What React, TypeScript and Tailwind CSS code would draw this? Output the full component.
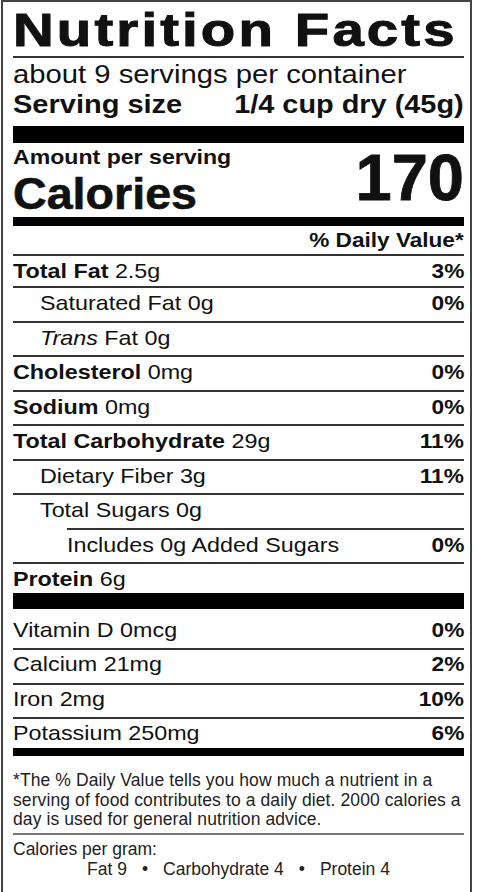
import clsx from 'clsx'
import type { ReactNode } from 'react'

type Nutrient = {
  label?: string
  italic?: string
  rest: string
  dv?: string
  level?: 0 | 1 | 2
  h?: string
}

const nutrients: Nutrient[] = [
  { label: 'Total Fat', rest: '2.5g', dv: '3%', h: 'h-[32px]' },
  { rest: 'Saturated Fat 0g', dv: '0%', level: 1 },
  { italic: 'Trans', rest: 'Fat 0g', level: 1 },
  { label: 'Cholesterol', rest: '0mg', dv: '0%' },
  { label: 'Sodium', rest: '0mg', dv: '0%' },
  { label: 'Total Carbohydrate', rest: '29g', dv: '11%' },
  { rest: 'Dietary Fiber 3g', dv: '11%', level: 1 },
  { rest: 'Total Sugars 0g', level: 1 },
  { rest: 'Includes 0g Added Sugars', dv: '0%', level: 2 },
  { label: 'Protein', rest: '6g', h: 'h-[31px]' },
]

const vitamins = [
  { name: 'Vitamin D 0mcg', dv: '0%', h: 'h-[39px] pt-[6px] leading-[29px]' },
  { name: 'Calcium 21mg', dv: '2%', h: 'h-[35px] border-t-2 leading-[27px]' },
  { name: 'Iron 2mg', dv: '10%', h: 'h-[34px] border-t-2 leading-[27px]' },
  { name: 'Potassium 250mg', dv: '6%', h: 'h-[31px] border-t-2 leading-[27px]' },
]

// label type is slightly stretched horizontally
function Wide({ children, right, className }: { children: ReactNode; right?: boolean; className?: string }) {
  return (
    <span
      className={clsx(
        'inline-block whitespace-nowrap',
        right ? 'origin-right' : 'origin-left',
        className ?? 'scale-x-[1.11]'
      )}
    >
      {children}
    </span>
  )
}

function NutrientRow({ n }: { n: Nutrient }) {
  return (
    <div
      className={clsx(
        'flex justify-between border-t-2 border-[#333] leading-[29px]',
        n.h ?? 'h-[34.5px]',
        n.level === 2 && 'ml-[54px]'
      )}
    >
      <span className={clsx(n.level === 1 && 'pl-[27px]')}>
        <Wide>
          {n.label && <span className="font-bold">{n.label} </span>}
          {n.italic && <span className="italic">{n.italic} </span>}
          {n.rest}
        </Wide>
      </span>
      {n.dv && (
        <Wide right className="scale-x-[1.08] font-bold">
          {n.dv}
        </Wide>
      )}
    </div>
  )
}

export default function App() {
  return (
    <div className="w-[478px] h-[892px] overflow-hidden bg-white font-['Liberation_Sans',Arial,sans-serif] text-[#111]">
      <div className="ml-px w-[471px] h-[892px] border-x-2 border-t-2 border-[#444] pl-[10px] pr-[6px]">
        {/* header */}
        <div className="mt-[4px] pb-[3px] border-b-2 border-[#333] text-[47px] leading-[47px] whitespace-nowrap">
          <span className="inline-block origin-left scale-x-[1.2] font-black tracking-[2.6px] [-webkit-text-stroke:1px_#111]">
            Nutrition Facts
          </span>
        </div>
        <div className="mt-[3px] text-[25px] leading-[26px]">
          <Wide className="scale-x-[1.17]">about 9 servings per container</Wide>
        </div>
        <div className="mt-[4px] flex justify-between text-[25px] leading-[26px] font-bold">
          <Wide className="scale-x-[1.16]">Serving size</Wide>
          <Wide right className="scale-x-[1.155]">1/4 cup dry (45g)</Wide>
        </div>

        <div className="mt-[9px] h-[17px] bg-black" />

        <div className="flex justify-between font-bold">
          <div>
            <div className="mt-[3px] text-[21px] leading-[22px]">
              <Wide className="scale-x-[1.1]">Amount per serving</Wide>
            </div>
            <div className="mt-[4px] text-[44px] leading-[44px]">
              <Wide className="scale-x-[1.06] [-webkit-text-stroke:0.6px_#111]">Calories</Wide>
            </div>
          </div>
          <div className="mt-[2px] text-[65px] leading-[65px] [-webkit-text-stroke:0.8px_#111]">170</div>
        </div>

        <div className="mt-px h-[9px] bg-black" />

        <div className="h-[28px] pt-[3px] text-right text-[20px] leading-[22px] font-bold">
          <Wide right className="scale-x-[1.13]">% Daily Value*</Wide>
        </div>

        <div className="text-[21px]">
          {nutrients.map((n, i) => (
            <NutrientRow key={i} n={n} />
          ))}
        </div>

        <div className="h-[16px] bg-black" />

        <div className="text-[21px]">
          {vitamins.map((v) => (
            <div key={v.name} className={clsx('flex justify-between border-[#333]', v.h)}>
              <Wide>{v.name}</Wide>
              <Wide right className="scale-x-[1.08] font-bold">
                {v.dv}
              </Wide>
            </div>
          ))}
        </div>

        <div className="h-[8px] bg-black" />

        {/* footnote */}
        <div className="pt-[15px] pb-[3px] border-b-2 border-[#777] text-[17.5px] leading-[19.5px] tracking-[0.1px] text-[#222] whitespace-nowrap">
          *The % Daily Value tells you how much a nutrient in a
          <br />
          serving of food contributes to a daily diet. 2000 calories a
          <br />
          day is used for general nutrition advice.
        </div>
        <div className="mt-[5px] text-[17.5px] leading-[19px] text-[#222]">Calories per gram:</div>
        <div className="mt-px flex justify-center gap-[15px] text-[17.5px] leading-[19px] text-[#222]">
          <span>Fat 9</span>
          <span>•</span>
          <span>Carbohydrate 4</span>
          <span>•</span>
          <span>Protein 4</span>
        </div>
      </div>
    </div>
  )
}
